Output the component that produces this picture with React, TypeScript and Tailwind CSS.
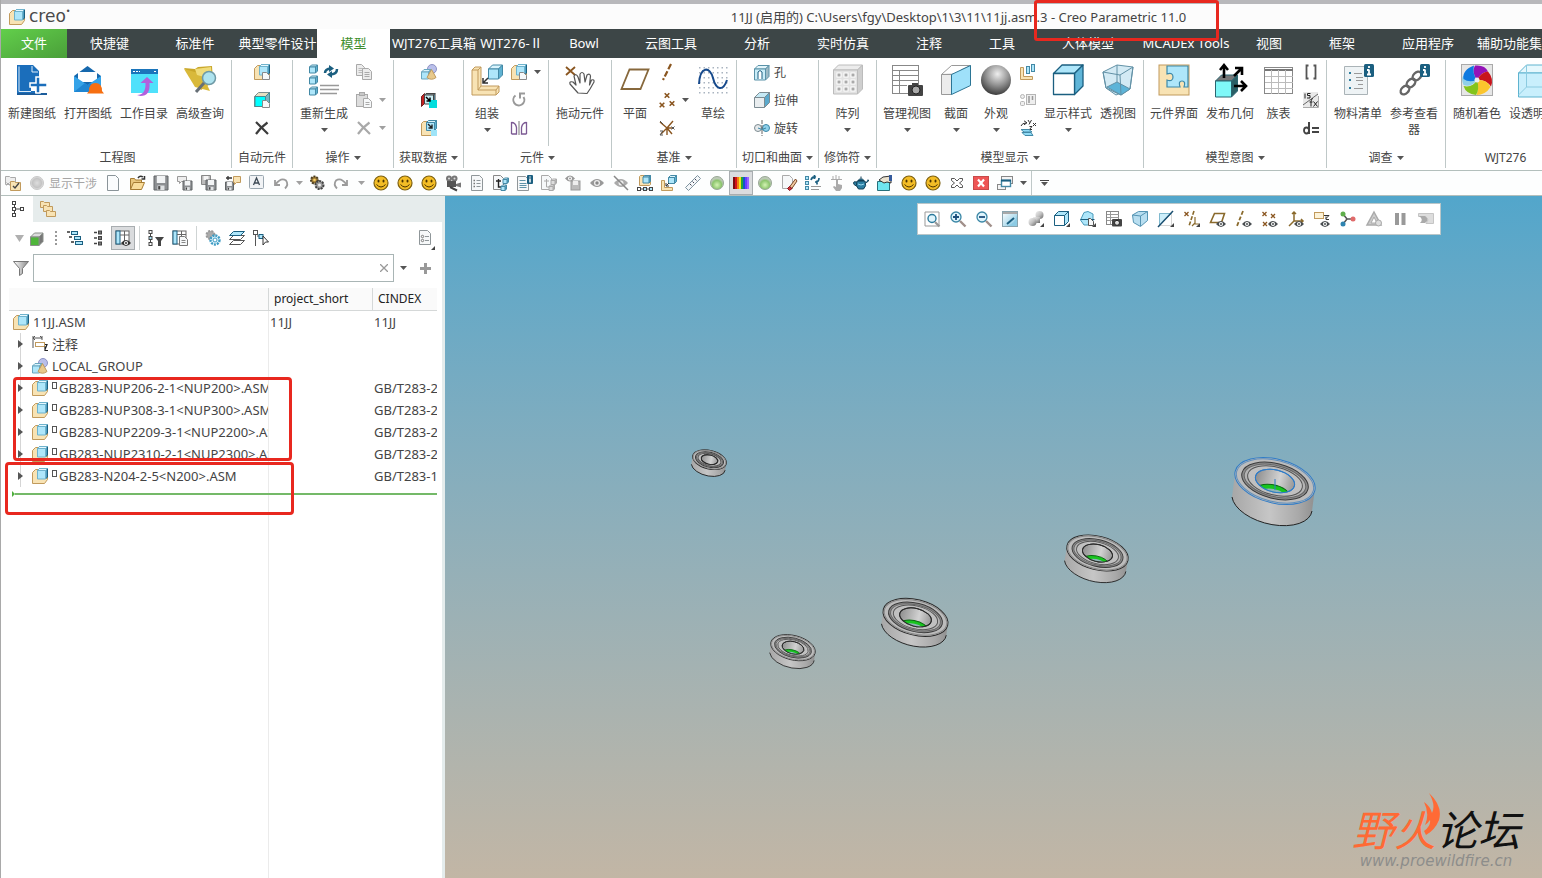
import type { ReactNode } from "react";

/* ---------- shared drawing parts ---------- */

const TAN = "#f8e3b4";
const TAN_D = "#c19a5c";
const SKY = "#aee6fa";
const SKY_D = "#1b5f80";
const SOFT = "#4389a6";

const cube = (x: number, y: number, s: number, d: number, front = SKY, edge = SOFT, top = "#d9f4fd", side = "#5fb2d2") => (
  <g stroke={edge} strokeLinejoin="round">
    <path d={`M${x} ${y + d} l${d} ${-d} h${s} l${-d} ${d} z`} fill={top} />
    <path d={`M${x + s} ${y + d} l${d} ${-d} v${s} l${-d} ${d} z`} fill={side} />
    <path d={`M${x} ${y + d} h${s} v${s} h${-s} z`} fill={front} />
  </g>
);

const page = (x: number, y: number, w: number, h: number, edge = "#8f9699", fill = "#f6f8f9") => (
  <path d={`M${x} ${y} h${w - 3} l3 3 v${h - 3} h${-w} z`} fill={fill} stroke={edge} />
);

const eye = (x: number, y: number, c = "#4a4f52") => (
  <g>
    <path d={`M${x - 5} ${y} q5 -6 10 0 q-5 6 -10 0z`} fill={c} />
    <circle cx={x} cy={y} r="2" fill="#fff" />
    <circle cx={x} cy={y} r="1" fill={c} />
  </g>
);

const cross = (x: number, y: number, r: number, c = "#8a5620", w = 1.3) => (
  <path d={`M${x - r} ${y - r} l${2 * r} ${2 * r} m0 ${-2 * r} l${-2 * r} ${2 * r}`} stroke={c} strokeWidth={w} fill="none" />
);

const floppy = (x: number, y: number, s: number) => (
  <g>
    <path d={`M${x} ${y} h${s} v${s} h${-s} z`} fill="#8c8f92" stroke="#606466" />
    <rect x={x + s * 0.2} y={y} width={s * 0.6} height={s * 0.5} fill="#f2f4f5" />
    <rect x={x + s * 0.25} y={y + s * 0.68} width={s * 0.5} height={s * 0.32} fill="#dfe2e4" />
    <rect x={x + s * 0.3} y={y + s * 0.72} width={s * 0.15} height={s * 0.25} fill="#444" />
  </g>
);

const asm = (
  <g>
    <path d="M.5 4.500 l3 -3 h12 v10 l-3 4 H.5 z" fill={TAN} stroke={TAN_D} />
    <path d="M5.500 2.500 l2 -2 h8 v8.500 l-2 2z" fill="#4d9fc2" stroke={SKY_D} />
    <path d="M5.500 2.500 l2 -2 h8 l-2 2z" fill="#e6f8fe" stroke="#6fb3cd" />
    <path d="M5.500 2.500 h8 v8.500 h-8z" fill={SKY} stroke="#6fb3cd" />
  </g>
);

const corner = <path d="M16 12 v4 h-4 z" fill="#444" />;
const dotGrid = (
  <g fill="#a9b4c0">
    {[2, 7, 12, 17, 22, 27].map((y) => [2, 6.500, 11, 15.500, 20, 24.500, 29].map((x) => <rect key={`${x}-${y}`} x={x} y={y + 1} width="1.500" height="1.500" />))}
  </g>
);

const small: Record<string, ReactNode> = {
  asm,
  asmDoc: (<g>{asm}{page(8.5, 8.5, 7, 7, "#888")}</g>),
  cyanDoc: (<g><path d="M.5 4.500 l4 -4 h11 v10 l-4 4 H.5z" fill="#e6e0c2" stroke="#7c8f90" /><rect x="1" y="4.500" width="10.500" height="10" fill="#0ff" stroke="#4c8a90" /><path d="M11.500 4.500l4 -4v10l-4 4z" fill="#7ab4c0" stroke="#4c8a90" />{page(8.5, 8.5, 7, 7, "#888")}</g>),
  bigX: <path d="M2 2 L14 14 M13.500 2.500 Q7 7 2 14" stroke="#3c3c3c" strokeWidth="2.200" fill="none" />,
  grayX: <path d="M2 2 L14 14 M13.500 2.500 Q7 7 2 14" stroke="#a9a9a9" strokeWidth="2.200" fill="none" />,
  copy: (<g>{page(0.5, 0.500, 8, 11, "#a9a9a9", "#ececec")}<path d="M2.500 4.500h4m-4 2h4m-4 2h4" stroke="#bbb" />{page(6.500, 4.500, 9, 11, "#a9a9a9", "#ececec")}<path d="M8.500 8.500h5m-5 2h5m-5 2h5" stroke="#aaa" /></g>),
  paste: (<g><rect x=".5" y="2.500" width="11" height="12" fill="#ddd" stroke="#a9a9a9" /><rect x="3.500" y=".5" width="5" height="3" fill="#c8c8c8" stroke="#a9a9a9" />{page(7.500, 6.500, 8, 9, "#a9a9a9")}<path d="M9.500 10.500h4m-4 2h4" stroke="#aaa" /></g>),
  shapes: (<g><circle cx="11" cy="5" r="4.500" fill="#b9bfea" stroke="#8d92c4" />{cube(0.5, 5.500, 7, 2.500, SKY, "#6aa7c0")}<path d="M10.500 5.500 L15 13.500 q-4.500 3.500 -9 0z" fill="#e8c98b" stroke={TAN_D} /></g>),
  importCyan: (<g><path d="M.5 4.500 l3 -3 v10 l-3 3z" fill="#c52020" stroke="#702020" />{cube(3.500, 1.500, 9, 1.500, "#c9eef5", "#444")}<rect x="8" y="8" width="8" height="8" fill="#0dd" /><path d="M5 5l4 4m0 -3.500v3.500h-3.500" stroke="#000" strokeWidth="1.500" fill="none" /></g>),
  importBlue: (<g><path d="M.5 3.500 l2 -2 h12 v10 l-3 4 H.5z" fill={TAN} stroke={TAN_D} />{cube(5.500, 0.500, 8, 2)}<path d="M7 4l4 4m0 -3.500v3.500h-3.500" stroke="#222" strokeWidth="1.400" fill="none" /><rect x="10" y="10" width="6" height="6" fill="#9fe4f8" /></g>),
  rotate: <path d="M4.500 3.500 A5.500 5.500 0 1 0 12.500 5 M14 1.500 h-5 v5" stroke="#999" strokeWidth="2" fill="none" />,
  mirror: <g fill="none"><path d="M.5 2v12M.5 2.500q4 0 5 5v6.500h-5M15.500 2v12M15.500 2.500q-4 0 -5 5v6.500h5" stroke="#7c5a94" strokeWidth="1.300" /><path d="M8 1v14" stroke="#777" /></g>,
  axis: <path d="M12 0 L4 16" stroke="#8a5620" strokeWidth="2.200" strokeDasharray="6 2" />,
  points: (<g>{cross(8, 3.500, 2.300, "#8a5620", 1.6)}{cross(3, 13, 2.300, "#8a5620", 1.6)}{cross(13, 11.500, 2.300, "#8a5620", 1.6)}</g>),
  csys: (<g><path d="M8 8 L1 2M8 8 L14 1M8 8 L2 14M8 8 L8 15M8 8H15M8 8 L13 14" stroke="#8a5620" strokeWidth="1.400" />{cross(14, 8, 1.500, "#555", 1)}<path d="M1 11h3l-3 4h3M1 1l3 3" stroke="#555" fill="none" /></g>),
  hole: (<g>{cube(0.500, 1.500, 11, 3.500, "#c9ecf7", "#5a92a8", "#e2f5fb", "#9dbac6")}<path d="M4 15V8q2 -3 4 0v7" fill="#fff" stroke={SKY_D} /></g>),
  extrude: (<g>{cube(0.500, 0.500, 10, 5, "#e9edef", "#7c8b92", "#c5e9f5", "#5aa9cc")}</g>),
  revolve: (<g><ellipse cx="4" cy="8" rx="3.500" ry="3.500" fill="#e5e9eb" stroke="#7d8b91" /><ellipse cx="12" cy="8" rx="3.500" ry="3.500" fill="#8fd0ea" stroke="#3a86a6" /><path d="M8 0v16" stroke="#666" strokeDasharray="4 1" /><path d="M4 8q4 3 8 0" fill="none" stroke="#3a86a6" /></g>),
  exploded: (<g><path d="M.5 3.500h3v9h9v3h-12z" fill={TAN} stroke={TAN_D} /><rect x="6.500" y="2.500" width="3" height="7" fill={SKY} stroke={SOFT} /><rect x="11.500" y=".5" width="3" height="7" fill={SKY} stroke={SOFT} /></g>),
  plates: (<g fill="#eee" stroke="#b5b5b5"><circle cx="2.500" cy="4.500" r="2" /><rect x=".5" y="9.500" width="4" height="4" rx="1" /><rect x="6.500" y="2.500" width="9" height="10" /><path d="M9 4v7M12.500 4v4" stroke="#999" strokeWidth="1.500" /></g>),
  orient: (<g><path d="M1 6q1 -3 5 -3M4 .8l3 2 -3 2" fill="none" stroke="#333" /><path d="M8 0l1.500 2.500m2 -2.500l-2.500 4.500M13 3l3 3m0 -3l-3 3M9.500 6.500h2.500l-2.500 3h2.500" stroke="#333" fill="none" /><path d="M1 9.500h8l3 2.500h-8zM2 12.500h9l2 3h-8z" fill="#8fdaf5" stroke={SOFT} /></g>),
  brackets: <path d="M5.500 1.500h-2v1.500l0 10v1.500h2M10.500 1.500h2v13h-2" stroke="#555" strokeWidth="1.800" fill="none" />,
  fx: (<g><rect x="0" y="0" width="15" height="15" fill="#e9e9e9" /><path d="M0 13L15 2" stroke="#666" /><path d="M2 1.500v5M7.500 1.500h-3v2h2.500v2.500h-3" stroke="#222" fill="none" /><path d="M10 6.500q-2 0 -2 3v5M6.500 10h3M10.500 9.500l4 5m0 -5l-4 5" stroke="#222" fill="none" /><path d="M0 15.500h15.500V4" stroke="#aaa" fill="none" /></g>),
  dEq: <g fill="none" stroke="#444"><path d="M6 2v12M9 8h7M9 12h7" strokeWidth="2" /><ellipse cx="3.500" cy="10.500" rx="2.500" ry="3" strokeWidth="1.800" /></g>,
  folderCheck: (<g><path d="M.5 1.500h4l1 1h5v7h-10z" fill="#eee" stroke="#aaa" />{cross(3, 9, 1.500, "#aaa", 1)}<path d="M5.500 6.500h4l1 1h5v8h-10z" fill={TAN} stroke={TAN_D} /><path d="M8 11l2 2 4 -5" fill="none" stroke="#444" strokeWidth="1.400" /></g>),
  ballGray: <circle cx="8" cy="8" r="6.500" fill="url(#gGray)" stroke="#c8c8c8" />,
  ballGreen: <circle cx="8" cy="8" r="6.500" fill="url(#gGreen)" stroke="#9aa898" />,
  newDoc: page(2.500, 0.500, 11, 15, "#8a9499", "#fafcfd"),
  open: (<g><path d="M1.500 14.500v-11h4l1 1.500h6v3" fill="#e9c77e" stroke="#a67c33" /><path d="M1.500 14.500l3 -7h11l-3 7z" fill="#f9dd9b" stroke="#a67c33" /><path d="M9 3q2 -3 5 -1M12.500 4h3v-3" fill="none" stroke="#333" strokeWidth="1.500" /></g>),
  save: floppy(1, 1, 14),
  saveAs: (<g><path d="M.5 1.500h9v5h-5l-2 2v-2h-2z" fill="#eee" stroke="#999" />{floppy(6, 6, 9)}</g>),
  saveCopy: (<g><path d="M.5 .5h9v9h-9z" fill="#bbb" stroke="#888" /><rect x="2.500" y="1" width="5" height="4" fill="#f5f5f5" />{floppy(5, 5, 10)}</g>),
  saveBack: (<g>{floppy(0.500, 7, 8)}<path d="M8.500 1.500h7v6h-4l-2 2v-2h-1z" fill={TAN} stroke={TAN_D} /><path d="M1 3h6M3 1v4" stroke="#333" strokeWidth="1.300" /></g>),
  letterA: (<g><rect x=".5" y=".5" width="14" height="13" rx="1" fill="#f1f3f5" stroke="#9aa7b0" /><path d="M4.500 10L7.500 3l3 7M5.500 8h4" fill="none" stroke="#3e4a55" strokeWidth="1.300" /></g>),
  undo: <path d="M2 5v5h5M2.500 9.500Q8 2 13 5.500q3 4 -1 8" fill="none" stroke="#9b9b9b" strokeWidth="1.800" />,
  redo: <path d="M14 5v5H9M13.500 9.500Q8 2 3 5.500q-3 4 1 8" fill="none" stroke="#9b9b9b" strokeWidth="1.800" />,
  gears: (<g><circle cx="5.500" cy="5" r="3.500" fill="#a07b34" stroke="#4c3f22" strokeWidth="2" strokeDasharray="2 1" /><circle cx="10.500" cy="10" r="4" fill="#999" stroke="#444" strokeWidth="2" strokeDasharray="2 1" /><circle cx="10.500" cy="10" r="1.500" fill="#eee" /><circle cx="5.500" cy="5" r="1.300" fill="#f6d26a" /></g>),
  smile: (<g><circle cx="8" cy="8" r="7" fill="#f3bd26" stroke="#7d6010" strokeWidth="1.200" /><ellipse cx="5.500" cy="6" rx="1" ry="1.600" fill="#4a3300" /><ellipse cx="10.500" cy="6" rx="1" ry="1.600" fill="#4a3300" /><path d="M3.500 9.500q4.500 5 9 0" fill="none" stroke="#4a3300" /></g>),
  camera: (<g fill="#777"><circle cx="4" cy="3.500" r="3" /><circle cx="9.500" cy="3.500" r="3" /><rect x="2" y="6" width="9" height="6" fill="#555" /><path d="M11 9l5 -1.500v5L11 11z" /><path d="M5 12l7 3.500" stroke="#444" strokeWidth="2" /><circle cx="4" cy="3.500" r="1" fill="#ddd" /><circle cx="9.500" cy="3.500" r="1" fill="#ddd" /></g>),
  docList: (<g>{page(2.500, 0.500, 11, 15)}<path d="M7.500 5.500h4m-4 3h4m-4 3h4" stroke="#8f9699" /><path d="M4.500 5.500h1.500m-1.500 3h1.500m-1.500 3h1.500" stroke="#777" strokeWidth="1.500" /></g>),
  docTree: (<g>{page(0.500, 0.500, 10, 14, "#888")}<path d="M3 6h5M5.500 4v8h4" stroke="#222" strokeWidth="1.400" fill="none" />{cube(10, 3, 4, 1.500)}{cube(8, 10, 4, 1.500)}</g>),
  docTreeG: (<g>{page(0.500, 0.500, 10, 14, "#aaa")}<path d="M3 6h5M5.500 4v8h4" stroke="#aaa" fill="none" />{cube(10, 4, 4, 1.500, "#ddd", "#aaa", "#eee", "#bbb")}{cube(8, 10, 4, 1.500, "#ddd", "#aaa", "#eee", "#bbb")}</g>),
  docInfo: (<g>{page(0.500, 1.500, 11, 14)}<path d="M2.500 5.500h6m-6 3h7m-7 2h7m-7 2h7" stroke="#5f93a8" /><rect x="10" y="0" width="6" height="9" rx="1" fill={SKY_D} /><path d="M13 3.500v4M13 1.500v1" stroke="#fff" strokeWidth="1.500" /></g>),
  eyeSave: (<g>{eye(5, 3.500, "#999")}<rect x="6" y="6" width="9" height="9" fill="#bbb" stroke="#999" /><rect x="8" y="6" width="5" height="4" fill="#eee" /></g>),
  eye: <g><path d="M1 8q7 -8 14 0q-7 8 -14 0z" fill="#999" /><circle cx="8" cy="8" r="3" fill="#eee" /><circle cx="8" cy="8" r="1.700" fill="#888" /></g>,
  eyeOff: <g><path d="M1 8q7 -8 14 0q-7 8 -14 0z" fill="#aaa" /><circle cx="8" cy="8" r="2.500" fill="#eee" /><path d="M1 1l14 14" stroke="#888" strokeWidth="1.500" /></g>,
  asmTree: (<g><path d="M2.500 1.500l1-1h10v9l-1 1h-10z" fill={TAN} stroke={TAN_D} />{cube(6, 0.500, 6, 1.500)}<g fill="#fff" stroke="#444"><rect x=".5" y="12.500" width="3" height="3" /><rect x="6.500" y="12.500" width="3" height="3" fill={SKY} /><rect x="12.500" y="12.500" width="3" height="3" fill={SKY} /><path d="M4 14h2m4 0h2" /></g></g>),
  assemble: (<g><path d="M.5 5.500h3v7h8v3h-11z" fill={TAN} stroke={TAN_D} />{cube(7.500, 0.500, 6, 2)}<path d="M8 8l-3 3m0 -3v3h3" stroke="#333" fill="none" /></g>),
  ruler: (<g><path d="M.5 12.500L12.500 .5l3 3 -12 12z" fill="#f4f7f9" stroke="#8094a0" /><path d="M5 9l1.500 1.500M7.500 6.500l1.500 1.500M10 4l1.500 1.500" stroke="#445" /></g>),
  rainbow: (<g>{["#7a0d12", "#d3121b", "#f07d13", "#f6e51a", "#23a638", "#1458c8", "#6a3cff", "#9a64ff"].map((c, i) => <rect key={c} x={i * 2} y="2" width="2" height="12" fill={c} />)}</g>),
  eraser: (<g>{page(1.500, 0.500, 10, 13, "#aaa")}<path d="M14.500 4l-6 8 2 2 5.500 -8z" fill="#f1c9a0" stroke="#7a4a2a" /><path d="M8.500 11.500l-2 2 2 2 2.500 -2z" fill="#c33" stroke="#812" /></g>),
  listSync: (<g><g fill={SKY} stroke={SOFT}><rect x=".5" y="1.500" width="3" height="3" /><rect x=".5" y="6.500" width="3" height="3" /><rect x=".5" y="11.500" width="3" height="3" /></g><path d="M6 5q1 -4 5 -3M9.500 0v4M14 3q0 4 -4 4M12 5.500v4" stroke={SKY_D} strokeWidth="1.700" fill="none" /><path d="M6 11.500h10M6 14.500h8" stroke="#999" /></g>),
  tap: (<g fill="#aaa"><path d="M4 1v4M7 0v4M10 1v4M2 4.500h11" stroke="#aaa" /><path d="M7 5h2v4l4 1v3l-2 3H7l-3 -4 1 -1 2 1z" /></g>),
  teapot: (<g fill="#2a7fa3" stroke="#123f55"><path d="M4 6h8q2 5 -1.500 8h-5Q2 11 4 6zM12.500 8q4 -2 3 -3l-1 0M3.500 7q-3 -1 -3 1t3 3" /><path d="M5 5.500q3 -3.500 6 0zM8 3V1.500" /><path d="M5 9q3 2 6 0" stroke="#9bd8ee" fill="none" /></g>),
  folderHand: (<g><path d="M.5 6.500h12v9h-12z" fill="#6fe6f0" stroke="#27707b" /><path d="M2 5l4 -3 8 -1v7l-4 -1 -3 1z" fill="#e9e2cf" stroke="#333" /><rect x="12" y="0" width="3" height="6" fill="#345a9c" /></g>),
  xx: <path d="M2.500 3.500h3l2.500 2.500 2.500 -2.500h3v2l-3 2.500 3 2.500v2h-3l-2.500 -2.500 -2.500 2.500h-3v-2l3 -2.500 -3 -2.500z" fill="#fff" stroke="#555" />,
  redX: (<g><rect x=".5" y="1.500" width="15" height="13" fill="#ee5555" stroke="#c74a4a" /><path d="M5 4.500l6 7m0 -7l-6 7" stroke="#fff" strokeWidth="2.200" /></g>),
  windows: (<g fill="#f4f4f4"><rect x="4.500" y="1.500" width="11" height="7" stroke="#888" /><rect x=".5" y="9.500" width="8" height="5" stroke="#888" /><rect x="4.500" y="5.500" width="9" height="6" fill="#fff" stroke={SOFT} strokeWidth="1.400" /><path d="M4 5.500h10" stroke={SKY_D} strokeWidth="2" /></g>),
  /* model tree panel */
  tree: (<g fill="#fff" stroke="#444"><path d="M3.500 4v8M5 8h6" /><rect x="1.500" y=".5" width="3" height="3" /><rect x="1.500" y="6.500" width="3" height="3" /><rect x="1.500" y="12.500" width="3" height="3" /><rect x="9.500" y="6.500" width="3" height="3" /></g>),
  folders: (<g fill={TAN} stroke={TAN_D}><path d="M.5 .5h3l1 1h5v5h-9z" /><path d="M3.500 4.500h3l1 1h5v5h-9z" /><path d="M6.500 9.500h3l1 1h5v5h-9z" /></g>),
  greenCube: cube(1.500, 1, 8.500, 4, "#4fb53a", "#8a8f8a", "#dcdcdc", "#777"),
  dots: (<g fill="#999"><rect x="7" y="1" width="2" height="2" /><rect x="7" y="5" width="2" height="2" /><rect x="7" y="9" width="2" height="2" /><rect x="7" y="13" width="2" height="2" /></g>),
  expand: (<g fill={SKY} stroke={SKY_D}><rect x="4.500" y="1.500" width="6" height="3" /><rect x="7.500" y="6.500" width="6" height="3" /><rect x="8.500" y="11.500" width="7" height="3" /><path d="M0 2h3M2 7h3M4 12h3" stroke="#333" strokeWidth="1.600" /></g>),
  collapse: (<g fill="#777" stroke="#444"><rect x="7.500" y="1" width="3" height="3" /><rect x="7.500" y="6.500" width="3" height="3" /><rect x="7.500" y="12" width="3" height="3" /><path d="M3 2.500h3M3 8h3M3 13.500h3" strokeWidth="1.600" /></g>),
  colsEye: (<g><rect x="1" y="1" width="13" height="13" fill="#fff" stroke="#666" /><rect x="1" y="1" width="4" height="13" fill={SKY} stroke={SKY_D} /><path d="M5 5h9M9.500 1v10" stroke="#666" />{eye(11, 13, "#333")}</g>),
  treeFilter: (<g><g fill="#fff" stroke="#444"><path d="M2.500 4v8" /><rect x="1" y=".5" width="3" height="3" /><rect x="1" y="6.500" width="3" height="3" fill={SKY} /><rect x="1" y="12.500" width="3" height="3" /></g><path d="M7 7h9l-3 4v5h-3v-5z" fill="#444" /></g>),
  colsDoc: (<g><rect x="1" y="1" width="13" height="13" fill="#fff" stroke="#666" /><rect x="1" y="1" width="4" height="13" fill={SKY} stroke={SKY_D} /><path d="M5 4.500h9M9.500 1v10" stroke="#666" />{page(7.500, 6.500, 8, 9, "#777")}<path d="M9.500 10.500h4m-4 2h4" stroke="#888" /></g>),
  gearBlue: (<g><circle cx="5.500" cy="5" r="4" fill="#aaa" stroke="#999" strokeWidth="2" strokeDasharray="2 1.200" /><circle cx="10" cy="10" r="4.500" fill="#e2f5fc" stroke="#3f9cc4" strokeWidth="2.400" strokeDasharray="2 1" /><circle cx="10" cy="10" r="2" fill="#fff" stroke="#3f9cc4" /></g>),
  layers: (<g fill="#fff" stroke="#555"><path d="M.5 14.500l4 -4h11l-4 4z" /><path d="M.5 9.500l4 -4h11l-4 4z" /><path d="M.5 5.500l4 -4h11l-4 4z" fill={SKY} stroke={SKY_D} /></g>),
  treeCursor: (<g fill="#fff" stroke="#555"><path d="M2.500 4v12M4 6h4" /><rect x=".5" y=".5" width="4" height="4" /><rect x="6" y="4.500" width="4" height="4" fill={SKY} stroke={SKY_D} /><path d="M10 6l5.500 6h-3l-2.500 3z" stroke="#333" /></g>),
  docCorner: (<g>{page(2.500, 0.500, 11, 14)}<path d="M8 6.500h4m-4 4h4" stroke="#8f9699" /><circle cx="5.500" cy="6.500" r="1.200" fill="none" stroke="#777" /><circle cx="5.500" cy="10.500" r="1.200" fill="none" stroke="#777" /></g>),
  funnel: <path d="M.5 1.500h15l-6 7v5l-3 2v-7z" fill="url(#gFunnel)" stroke="#777" />,
  note: (<g><path d="M1 0v12M1 2h9M10 0v4M3 0l-2 2 2 2M8 0l2 2" stroke="#555" fill="none" /><rect x="3.500" y="6.500" width="9" height="4" fill="#fff" stroke={TAN_D} /><path d="M13 8.500h2l-2 5m0 -3v4h3" stroke="#222" fill="none" strokeWidth="1.200" /></g>),
  /* view toolbar */
  refit: (<g><path d="M1 15V1h14v14z" fill="#fff" stroke="#999" /><circle cx="8" cy="7.500" r="4" fill="#dff4fc" stroke="#2b7a9c" strokeWidth="1.400" /><path d="M11 11l4.500 4.500" stroke="#999" strokeWidth="2.200" /></g>),
  zoomIn: (<g><circle cx="6" cy="6" r="5" fill="#dff4fc" stroke="#3b87a6" strokeWidth="1.300" /><path d="M3 6h6M6 3v6" stroke="#1c4f7c" strokeWidth="1.800" /><path d="M10 10l5.500 5.500" stroke="#a08f8a" strokeWidth="2.400" /></g>),
  zoomOut: (<g><circle cx="6" cy="6" r="5" fill="#dff4fc" stroke="#3b87a6" strokeWidth="1.300" /><path d="M3 6h6" stroke="#1c4f7c" strokeWidth="1.800" /><path d="M10 10l5.500 5.500" stroke="#a08f8a" strokeWidth="2.400" /></g>),
  repaint: (<g><rect x=".5" y=".5" width="15" height="15" fill="url(#gPaint)" stroke="#8aa4ae" /><rect x="1" y="1" width="14" height="2" fill="#a9a9a9" /><path d="M5 15Q14 12 15 4v11z" fill="#8ccbe4" /><path d="M5 13L12 7" stroke={SKY_D} strokeWidth="2" /></g>),
  shading: (<g><circle cx="11.500" cy="4" r="4" fill="url(#gLight)" /><rect x="5" y="6" width="7" height="6" fill="url(#gLight)" /><circle cx="4.500" cy="11" r="4" fill="url(#gLight)" />{corner}</g>),
  styleCube: (<g>{cube(0.500, 0.500, 10, 4, "#fff", SKY_D, "#aee6fa", "#aee6fa")}{corner}</g>),
  saved: (<g><path d="M.5 9L4 1.500L8 .5l5 2.500v8l-5 3h-4z" fill={SKY} stroke="#4b9bbb" /><path d="M.5 8.500h14" stroke="#1b5f80" />{page(8.500, 7.500, 5, 7, "#555")}{corner}</g>),
  viewMgr: (<g><rect x=".5" y=".5" width="12" height="13" fill="#fff" stroke="#888" /><path d="M1 3.500h12M1 6.500h12M1 9.500h6M4.500 1v12" stroke="#999" /><rect x="6" y="8" width="10" height="7.500" rx="1" fill="#444" /><circle cx="11" cy="11.800" r="2.500" fill="#ddd" stroke="#222" /></g>),
  persp: (<g><path d="M.5 4l6 -3.500h9v9l-7 6 -7 -4z" fill="#b8def0" stroke="#5594b3" /><path d="M.5 4l8 1 7 -4.500M8.500 5v10" stroke="#5594b3" fill="none" /></g>),
  section: (<g><rect x="1.500" y="2.500" width="12" height="12" fill="#fff" stroke="#aaa" strokeDasharray="1 1" /><path d="M1.500 14.500v-12h12z" fill="#cdeefa" stroke="#7fb9cf" /><path d="M0 16L15 0" stroke="#1b4f70" strokeWidth="1.500" />{corner}</g>),
  datums: (<g>{cross(2.500, 3, 2)}<path d="M10 0L5 15" stroke="#8a6a2c" strokeWidth="1.600" strokeDasharray="4 1.500" /><path d="M11 6v7h4M11 12l-3 3" stroke="#8a6a2c" strokeWidth="1.200" />{corner}</g>),
  planeEye: (<g><path d="M.5 11.500l4 -9h10l-3 9z" fill="#fff" stroke="#8a6a2c" strokeWidth="1.600" />{eye(11, 13)}</g>),
  axisEye: (<g><path d="M7 0L1 15" stroke="#8a6a2c" strokeWidth="1.800" strokeDasharray="4 2" />{eye(11, 13)}</g>),
  pointEye: (<g>{cross(2.500, 3, 2)}{cross(11, 5, 2)}{cross(3, 13, 2)}{eye(11, 13)}</g>),
  csysEye: (<g><path d="M6 1v9h9M6 10l-5 5M4 3l2 -2 2 2M13 8l2 2 -2 2" stroke="#8a6a2c" strokeWidth="1.500" fill="none" />{eye(11, 13)}</g>),
  noteEye: (<g><rect x=".5" y="1.500" width="9" height="6" fill="#fdf3d8" stroke={TAN_D} /><path d="M10 4.500h5l-3 3m0 -2v3h3" stroke="#333" fill="none" />{eye(11, 13)}</g>),
  spin: (<g><path d="M3 3l4 5h6M7 8l-4 5" stroke="#555" strokeWidth="1.500" fill="none" /><circle cx="3" cy="3" r="2.500" fill="#5fae4b" /><circle cx="13" cy="8" r="2.500" fill="#e06a6a" /><circle cx="3" cy="13" r="2.500" fill="#2f84b0" /></g>),
  sim: (<g fill="#ccc" stroke="#aaa"><path d="M8 1l7 13H1z" strokeWidth="1.500" /><path d="M8 6l3 6H5z" fill="#fff" /><circle cx="12.500" cy="12" r="3" fill="#ddd" /></g>),
  pause: <g fill="#999"><rect x="3" y="2" width="4" height="12" /><rect x="9.500" y="2" width="4" height="12" /></g>,
  resume: (<g><path d="M.5 2.500h15v10H8q4 -4 -.5 -7h-7z" fill="#ddd" stroke="#c5c5c5" /><path d="M1 5h6q5 4 0 7H2q4 -3.500 -1 -7z" fill="#aaa" /></g>),
};

const large: Record<string, ReactNode> = {
  newDrawing: (<g><path d="M1 1h16l6 6v11h-3v3h-5v6h4v3H1z" fill="#1b6ebb" /><path d="M1 29h30v2H1z" fill="#1c5d9c" /><path d="M3 2.500v25M3 27.500h12M16 2v6h6" stroke="#dcecf9" fill="none" /><path d="M20 13h4v6h7v4h-7v6h-4v-6h-6v-4h6z" fill="#1b6ebb" stroke="#fff" strokeWidth="1.500" /></g>),
  openDrawing: (<g><path d="M2 12L15.500 2 29 12v16H2z" fill="#1668ad" /><path d="M6 8h19v10H6z" fill="#fff" /><path d="M2 12l13.500 9L29 12v16H2z" fill="#35a3e8" /><path d="M2 28l11 -9 2.500 2 2.500 -2 11 9z" fill="#1f86d2" /><path d="M17 27q0 -8 6.500 -8t6.500 8l2 2.500H15z" fill="#f66f11" /></g>),
  workDir: (<g><rect x="3" y="5" width="27" height="24" fill="#4fe1fb" /><rect x="3" y="5" width="27" height="5" fill="#1b75bb" /><path d="M5 7.500h7M26 7.500h2" stroke="#fff" strokeDasharray="2 1" /><path d="M9 31q9 0 8.500 -12h-5L19 13l6.500 6h-4q1 13 -9 13z" fill="#b260dd" /></g>),
  search: (<g><path d="M0 4l11 1 3 -2 14 -1 1 16 -12 8z" fill="#c9a72a" /><path d="M0 5l11 18 15 4 -8 -17z" fill="#d9b93a" /><path d="M11 5l16 -2 1 12 -15 -4z" fill="#f0dc7a" /><circle cx="25" cy="14" r="6.500" fill="#aee3ef" stroke="#6f9aa6" strokeWidth="1.500" /><path d="M20 19L12 28" stroke="#666f76" strokeWidth="3" /></g>),
  regen: (<g>{[1, 12, 23].map((y) => <g key={y}>{cube(1.500, y, 6, 2)}</g>)}<path d="M17 9q0 -4 6 -4.500" stroke={SKY_D} strokeWidth="2.500" fill="none" /><path d="M21 1l5 3.500 -5 3.500z" fill={SKY_D} /><path d="M29 5q0 5 -6 5.500" stroke={SKY_D} strokeWidth="2.500" fill="none" /><path d="M24 7l-5 3.500 5 3.500z" fill={SKY_D} /><path d="M12 21.500h19M12 25.500h19M12 29.500h17" stroke="#999" strokeWidth="1.600" /></g>),
  assemble: (<g><path d="M1 6l3 -3h6v19h18v6l-3 3H1z" fill={TAN} stroke={TAN_D} /><path d="M1 6h6v20h18M7 6l3 -3M7 26l3 -4M25 26l3 -4M25 26v5" fill="none" stroke={TAN_D} />{cube(17.500, 1, 10, 4)}<path d="M17 14l-5 5m0 -5v5h5" stroke="#333" strokeWidth="1.500" fill="none" /></g>),
  drag: (<g><path d="M2 3l9 8m0 -8l-9 8" stroke="#8a5620" strokeWidth="1.800" /><path d="M14 29l-8 -9q-1 -3 3 -2l3 3L10 12q2 -3 4 1l2 6 0 -9q2 -3 4 0l1 8 2 -7q3 -2 3.500 1l-1 9 2 -5q3 -1 2.500 2L26 25l-3 4.500z" fill="#fff" stroke="#555" strokeWidth="1.200" strokeLinejoin="round" /></g>),
  plane: <path d="M2.500 25L10.500 5.500h19L21.500 25z" fill="#fff" stroke="#87683c" strokeWidth="1.800" />,
  sketch: (<g>{dotGrid}<path d="M2 20C3 2 13 2 16 14S26 28 30 16" fill="none" stroke="#174a8c" strokeWidth="2" /></g>),
  pattern: (<g>{cube(1.500, 1, 24, 5, "#e2e2e2", "#bcbcbc", "#ececec", "#cfcfcf")}<g fill="#aaa">{[9, 16, 23].map((y) => [5, 12, 19].map((x) => <rect key={`${x}${y}`} x={x} y={y} width="4" height="4" stroke="#fff" />))}</g></g>),
  viewMgr: (<g><rect x="1.500" y="1.500" width="26" height="28" fill="#fff" stroke="#888" /><path d="M2 6.500h26M2 11.500h26M2 16.500h26M2 21.500h14M8.500 6v24" stroke="#888" /><rect x="17" y="21" width="15" height="11" rx="1" fill="#444" /><rect x="21" y="19" width="6" height="3" fill="#444" /><circle cx="25" cy="26" r="4" fill="#aaa" stroke="#222" /></g>),
  section: (<g><path d="M1.500 10.500l10 -9h19L21 6v4z" fill="#fff" stroke="#999" /><path d="M1.500 10.500h10v20h-10z" fill="#ececec" stroke="#999" /><path d="M11.500 10.500L30.500 1.500v20l-19 9z" fill="#9fe1fa" stroke="#2b7595" /></g>),
  sphere: <circle cx="16" cy="16" r="15" fill="url(#gSphere)" />,
  display: <g strokeWidth="1.300">{cube(1.500, 1, 21, 8.500, "#fff", SKY_D, "#aee6fa", "#5fb5d8")}</g>,
  perspective: (<g fill="#a9dcf0" stroke="#6291a6"><path d="M1 8l14 -7 16 2 -3 22 -14 6L4 24z" fill="#d3eaf4" /><path d="M1 8l17 3L31 3l-3 22 -9 6 -15 -7z" fill="none" /><path d="M5 23l10 -5 13 7 -9 6z" fill="#5db4d8" /><path d="M15 1v17M18 11l1 20" /></g>),
  interface: (<g><rect x="1" y="1" width="30" height="30" fill={TAN} stroke={TAN_D} /><path d="M9 2h21v21h-4q2 -6 -2 -6t-2 6H9v-7q6 2 6 -3t-6 -3z" fill={SKY} stroke="#3c88a8" strokeWidth="1.200" /></g>),
  publish: (<g>{cube(1.500, 11, 16, 6, "#7ff8f8", "#2b6570", "#777", "#2a5f66")}<path d="M10 14V2M6 6l4 -5 4 5M20 12l7 -7M21 4h7v7M20 22h11M27 17l5 5 -5 5" stroke="#000" strokeWidth="2.600" fill="none" /></g>),
  table: (<g><rect x="1.500" y="3.500" width="28" height="26" fill="#fff" stroke="#888" /><path d="M2 6h28" stroke="#777" strokeWidth="2" /><path d="M2 12.500h28M2 18.500h28M2 24.500h28M8.500 6v24M15.500 6v24M22.500 6v24" stroke="#bbb" /></g>),
  bom: (<g>{page(2.500, 2.500, 23, 28, "#aab3b7", "#eef3f5")}<path d="M7 9h2M7 16h2M7 24h2" stroke="#2f7fa0" strokeWidth="2" /><path d="M12 9.500h8M14 13.500h7M14 16.500h7M16 20.500h5M12 24.500h9" stroke="#999" /><rect x="22" y="0" width="10" height="13" rx="1.500" fill={SKY_D} /><path d="M27 5.500v5M25 10.500h4M27 2v2M25 6h2" stroke="#fff" strokeWidth="1.800" /></g>),
  refs: (<g fill="none" stroke="#666" strokeWidth="2.400"><ellipse cx="7" cy="26" rx="5" ry="3.500" transform="rotate(-45 7 26)" /><ellipse cx="13" cy="19" rx="5" ry="3.500" transform="rotate(-45 13 19)" /><ellipse cx="19" cy="12" rx="5" ry="3.500" transform="rotate(-45 19 12)" /><rect x="22" y="0" width="10" height="13" rx="1.500" fill={SKY_D} stroke="none" /><path d="M27 5.500v5M25 10.500h4M27 2v2M25 6h2" stroke="#fff" strokeWidth="1.800" /></g>),
  color: (<g><rect x=".5" y=".5" width="31" height="31" fill="#e6e6e6" stroke="#aaa" /><path d="M16 16Q10 8 14 1.500q10 -1 13 6Q20 8 16 16z" fill="#9413b8" /><path d="M16 16Q20 8 27 7.500q6 7 3 15Q25 15 16 16z" fill="#c8141c" /><path d="M16 16q10 -1 13.500 7 -5 8 -14 8 3 -7 .5 -15z" fill="#fbc52d" /><path d="M16 16q3 9 -1 15Q5 30 2.500 22q9 2 13.500 -6z" fill="#83c41c" /><path d="M16 16Q10 24 2.500 21 0 15 2 12q8 -1 14 4z" fill="#8fd0e8" /><path d="M16 16Q8 19 2.500 15 1 6 13 1.500q-2 8 3 14.500z" fill="#0f7ae0" /><circle cx="16" cy="16" r="2.500" fill="#eee" /></g>),
  transparent: (<g>{cube(1.500, 1, 24, 8, "#c9effc", "#5fb3cf", "#e6f8fd", "#a9dff0")}<path d="M9.500 1v22h24M9.500 23L1.500 31" stroke="#8ccbe0" fill="none" /></g>),
};

/* ---------- small UI parts ---------- */

const S = ({ n }: { n: string }) => (
  <svg viewBox="0 0 16 16" className="h-4 w-4 shrink-0 overflow-visible" fill="none" aria-hidden="true">{small[n]}</svg>
);

const L = ({ n }: { n: string }) => (
  <svg viewBox="0 0 32 32" className="h-8 w-8 shrink-0 overflow-visible" fill="none" aria-hidden="true">{large[n]}</svg>
);

const Caret = ({ dim = false }: { dim?: boolean }) => (
  <svg viewBox="0 0 7 4" className="h-1 w-[7px] shrink-0" aria-hidden="true">
    <path d="M0 0h7L3.500 4z" fill={dim ? "#a0a0a0" : "#555"} />
  </svg>
);

const Big = ({ icon, label, w = "w-14", drop = false }: { icon: string; label: string; w?: string; drop?: boolean }) => (
  <button className={`flex shrink-0 flex-col items-center pt-[6px] ${w}`}>
    <L n={icon} />
    <span className="mt-[10px] text-center leading-4 break-all">{label}</span>
    {drop && <span className="flex h-4 items-center"><Caret /></span>}
  </button>
);

type Mini = { icon: string; drop?: boolean; dim?: boolean; text?: string };

const Minis = ({ items, w = "w-6" }: { items: Mini[]; w?: string }) => (
  <div className={`flex shrink-0 flex-col ${w}`}>
    {items.map((m) => (
      <div key={m.icon} className="flex h-7 items-center">
        <button aria-label={m.text ?? m.icon} className="flex h-6 min-w-6 items-center justify-center gap-1">
          <S n={m.icon} />
          {m.text && <span className="pt-[2px]">{m.text}</span>}
        </button>
        {m.drop && <button aria-label={`${m.icon} menu`} className="flex h-6 w-3 items-center justify-center"><Caret dim={m.dim} /></button>}
      </div>
    ))}
  </div>
);

const Group = ({ label, w, drop = false, children }: { label: string; w: string; drop?: boolean; children: ReactNode }) => (
  <section className={`flex shrink-0 ${w}`}>
    <div className="flex min-w-0 flex-1 flex-col">
      <div className="flex h-[88px]">{children}</div>
      <div className="flex h-6 items-center justify-center gap-1 whitespace-nowrap">
        {label}
        {drop && <Caret />}
      </div>
    </div>
    <div className="my-[2px] w-px bg-[#bfc8c8]" />
  </section>
);

/* ---------- data ---------- */

const tabs: [string, string][] = [
  ["文件", "w-[66px]"], ["快捷键", "w-[85px]"], ["标准件", "w-[86px]"], ["典型零件设计", "w-[79px]"], ["模型", "w-[73px]"],
  ["WJT276工具箱", "w-[88px]"], ["WJT276-Ⅱ", "w-[67px]"], ["Bowl", "w-[78px]"], ["云图工具", "w-[96px]"], ["分析", "w-[76px]"],
  ["实时仿真", "w-[96px]"], ["注释", "w-[76px]"], ["工具", "w-[70px]"], ["人体模型", "w-[102px]"], ["MCADEx Tools", "w-[94px]"],
  ["视图", "w-[72px]"], ["框架", "w-[74px]"], ["应用程序", "w-[98px]"], ["辅助功能集", "w-[67px]"],
];

const quickA = ["newDoc", "open", "save", "saveAs", "saveCopy", "saveBack", "letterA", "undo"];
const quickB = [
  "smile", "smile", "smile", "camera", "docList", "docTree", "docInfo", "docTreeG", "eyeSave", "eye", "eyeOff", "asmTree", "assemble",
  "ruler", "ballGreen", "rainbow", "ballGreen", "eraser", "listSync", "tap", "teapot", "folderHand", "smile", "smile", "xx", "redX", "windows",
];

const viewTools = [
  "refit", "zoomIn", "zoomOut", "repaint", "shading", "styleCube", "saved", "viewMgr", "persp", "section",
  "datums", "planeEye", "axisEye", "pointEye", "csysEye", "noteEye", "spin", "sim", "pause", "resume",
];

const parts: [string, string][] = [
  ["GB283-NUP206-2-1<NUP200>.ASM", "GB/T283-2007"],
  ["GB283-NUP308-3-1<NUP300>.ASM", "GB/T283-2007"],
  ["GB283-NUP2209-3-1<NUP2200>.ASM", "GB/T283-2007"],
  ["GB283-NUP2310-2-1<NUP2300>.ASM", "GB/T283-2007"],
  ["GB283-N204-2-5<N200>.ASM", "GB/T283-1994"],
];

const QuickButton = ({ n, active = false }: { n: string; active?: boolean }) => (
  <button aria-label={n} className={`flex h-6 w-6 shrink-0 items-center justify-center ${active ? "border border-[#a8adb0] bg-[#dadcde]" : ""}`}>
    <S n={n} />
  </button>
);

const Expander = () => (
  <button aria-label="展开" className="flex h-[22px] w-[23px] shrink-0 items-center justify-center bg-[linear-gradient(#d5d5d5,#d5d5d5)] bg-[length:1px_100%] bg-[position:11px_0] bg-no-repeat">
    <svg viewBox="0 0 5 8" className="h-2 w-[5px]"><path d="M0 0l5 4 -5 4z" fill="#555" /></svg>
  </button>
);

/* Ball bearing seen from above; the rim is an ellipse of 41 x 22 units tilted by 14 degrees. */
const Bearing = ({ depth, dx, id, green = true, selected = false, line = 1 }: { depth: number; dx: number; id: string; green?: boolean; selected?: boolean; line?: number }) => {
  const ring = (rx: number, ry: number, fill: string, stroke = "#3a3a3a") => (
    <ellipse rx={rx} ry={ry} transform="rotate(14)" fill={fill} stroke={stroke} strokeWidth={line} />
  );
  const edge = selected ? "#2f7cc8" : "#2b2b2b";
  return (
    <svg viewBox="-50 -30 100 90" className="h-full w-full" aria-hidden="true">
      <defs>
        <linearGradient id={`${id}s`}><stop offset="0" stopColor="#a7a7a7" /><stop offset=".45" stopColor="#c6c6c6" /><stop offset=".8" stopColor="#a9a9a9" /><stop offset="1" stopColor="#8f8f8f" /></linearGradient>
        <linearGradient id={`${id}b`}><stop offset="0" stopColor="#8f8f8f" /><stop offset=".6" stopColor="#d2d2d2" /><stop offset="1" stopColor="#969696" /></linearGradient>
        <clipPath id={`${id}c`}><ellipse rx="20" ry="11" transform="rotate(14)" /></clipPath>
      </defs>
      <path d={`M-40 -7L${-40 + dx} ${-7 + depth}A41 22 14 0 0 ${40 + dx} ${7 + depth}L40 7z`} fill={`url(#${id}s)`} />
      <path d={`M${-40 + dx} ${-7 + depth}A41 22 14 0 0 ${40 + dx} ${7 + depth}`} fill="none" stroke="#222" strokeWidth={line} />
      {ring(41, 22, "#b9b9b9", edge)}
      {ring(39.5, 20.500, "#bcbcbc", selected ? "#5f8fbd" : "#888")}
      {ring(34, 17.500, "#8c8c8c")}
      {ring(31.5, 15.500, "#b4b4b4", "#666")}
      {ring(28, 14, "#c0c0c0", "#555")}
      {ring(20, 11, `url(#${id}b)`, edge)}
      {green && (
        <g clipPath={`url(#${id}c)`}>
          <ellipse cx="-1" cy="13" rx="18" ry="9" transform="rotate(10)" fill="#18c51f" stroke="#0b6b12" strokeWidth={line} />
          <ellipse cx="0" cy="16" rx="15" ry="8" transform="rotate(10)" fill="#8fb5b8" />
        </g>
      )}
      {ring(20, 11, "none", edge)}
      {selected && <path d="M0 -2v11" stroke="#2f7cc8" />}
    </svg>
  );
};

export default function App() {
  return (
    <div className="relative flex min-h-screen flex-col overflow-hidden border-l border-[#a9a9a9] bg-white font-['Noto_Sans','Noto_Sans_CJK_SC',sans-serif] text-xs text-[#444]">
      <svg className="absolute h-0 w-0" aria-hidden="true">
        <defs>
          <radialGradient id="gGray"><stop offset="0" stopColor="#ddd" /><stop offset=".7" stopColor="#c4c4c4" /><stop offset="1" stopColor="#e2e2e2" /></radialGradient>
          <radialGradient id="gGreen" cx=".5" cy=".65"><stop offset="0" stopColor="#d4f3b4" /><stop offset=".7" stopColor="#8cc56d" /><stop offset="1" stopColor="#bcc9b6" /></radialGradient>
          <radialGradient id="gSphere" cx=".55" cy=".3" r=".7"><stop offset="0" stopColor="#eee" /><stop offset=".5" stopColor="#999" /><stop offset="1" stopColor="#3c3c3c" /></radialGradient>
          <linearGradient id="gLight" x1="0" y1="0" x2="1" y2="1"><stop offset="0" stopColor="#f2f2f2" /><stop offset=".5" stopColor="#c2c2c2" /><stop offset="1" stopColor="#666" /></linearGradient>
          <linearGradient id="gFunnel"><stop offset="0" stopColor="#fff" /><stop offset="1" stopColor="#888" /></linearGradient>
          <linearGradient id="gPaint" x1="0" y1="0" x2="1" y2="1"><stop offset="0" stopColor="#fff" /><stop offset="1" stopColor="#7fc6e2" /></linearGradient>
        </defs>
      </svg>

      <header className="flex h-[29px] shrink-0 items-center border-t-4 border-[#b8b8bb] bg-[#fcfcfc]">
        <div className="flex w-[72px] items-center gap-1 pl-2">
          <S n="asm" />
          <span className="flex items-start pb-[2px] font-['DejaVu_Sans',sans-serif] text-[17px] leading-5 text-[#4a4a4a]">creo<span className="text-[8px] leading-3">•</span></span>
        </div>
        <h1 className="flex-1 pl-[302px] text-center text-[13px] leading-5 whitespace-pre text-[#444]">11JJ (启用的) C:\Users\fgy\Desktop\1\3\11\11jj.asm.3 - Creo Parametric 11.0</h1>
      </header>

      <nav className="flex h-[29px] shrink-0 overflow-hidden bg-[#3d4647] text-[13px] text-white">
        {tabs.map(([name, w]) => (
          <button
            key={name}
            className={`flex h-full shrink-0 items-center justify-center overflow-hidden pt-px whitespace-nowrap ${w} ${name === "文件" ? "bg-linear-to-br from-[#62cf4b] to-[#4a9f39]" : ""} ${name === "模型" ? "bg-white text-[#3f8f2f]" : ""} ${name === "辅助功能集" ? "justify-start" : ""}`}
          >
            {name}
          </button>
        ))}
      </nav>

      <div className="flex h-[113px] shrink-0 overflow-hidden border-b border-[#b3bfbc] bg-white">
        <Group label="工程图" w="w-[231px] pl-[3px]">
          <Big icon="newDrawing" label="新建图纸" />
          <Big icon="openDrawing" label="打开图纸" />
          <Big icon="workDir" label="工作目录" />
          <Big icon="search" label="高级查询" />
        </Group>
        <Group label="自动元件" w="w-[61px]">
          <div className="flex flex-1 justify-center"><Minis items={[{ icon: "asmDoc" }, { icon: "cyanDoc" }, { icon: "bigX" }]} /></div>
        </Group>
        <Group label="操作" w="w-[101px]" drop>
          <div className="w-[3px]" />
          <Big icon="regen" label="重新生成" drop />
          <Minis w="w-9" items={[{ icon: "copy" }, { icon: "paste", drop: true, dim: true }, { icon: "grayX", drop: true, dim: true }]} />
        </Group>
        <Group label="获取数据" w="w-[70px]" drop>
          <div className="flex flex-1 justify-center"><Minis items={[{ icon: "shapes" }, { icon: "importCyan" }, { icon: "importBlue" }]} /></div>
        </Group>
        <Group label="元件" w="w-[148px]" drop>
          <div className="w-[3px]" />
          <Big icon="assemble" label="组装" w="w-10" drop />
          <Minis w="w-9" items={[{ icon: "asmDoc", drop: true }, { icon: "rotate" }, { icon: "mirror" }]} />
          <div className="mt-[2px] ml-[5px] w-px bg-[#bfc8c8]" />
          <Big icon="drag" label="拖动元件" w="w-[62px]" />
        </Group>
        <Group label="基准" w="w-[125px]" drop>
          <div className="w-[3px]" />
          <Big icon="plane" label="平面" w="w-10" />
          <Minis w="w-9" items={[{ icon: "axis" }, { icon: "points", drop: true }, { icon: "csys" }]} />
          <Big icon="sketch" label="草绘" w="w-11" />
        </Group>
        <Group label="切口和曲面" w="w-[82px]" drop>
          <div className="w-[18px]" />
          <Minis w="w-16" items={[{ icon: "hole", text: "孔" }, { icon: "extrude", text: "拉伸" }, { icon: "revolve", text: "旋转" }]} />
        </Group>
        <Group label="修饰符" w="w-[58px]" drop>
          <Big icon="pattern" label="阵列" w="w-[57px]" drop />
        </Group>
        <Group label="模型显示" w="w-[267px]" drop>
          <div className="w-px" />
          <Big icon="viewMgr" label="管理视图" w="w-[58px]" drop />
          <Big icon="section" label="截面" w="w-10" drop />
          <Big icon="sphere" label="外观" w="w-10" drop />
          <Minis items={[{ icon: "exploded" }, { icon: "plates" }, { icon: "orient" }]} />
          <Big icon="display" label="显示样式" drop />
          <Big icon="perspective" label="透视图" w="w-11" />
        </Group>
        <Group label="模型意图" w="w-[183px]" drop>
          <div className="w-[2px]" />
          <Big icon="interface" label="元件界面" />
          <Big icon="publish" label="发布几何" />
          <Big icon="table" label="族表" w="w-[41px]" />
          <Minis items={[{ icon: "brackets" }, { icon: "fx" }, { icon: "dEq" }]} />
        </Group>
        <Group label="调查" w="w-[119px]" drop>
          <div className="w-[3px]" />
          <Big icon="bom" label="物料清单" />
          <Big icon="refs" label="参考查看器" w="w-14 px-1" />
        </Group>
        <Group label="WJT276" w="w-[120px]">
          <div className="w-[3px]" />
          <Big icon="color" label="随机着色" />
          <Big icon="transparent" label="设透明度" />
        </Group>
      </div>

      <div className="flex h-[25px] shrink-0 items-center overflow-hidden border-b border-[#b3bfbc] bg-[#fdfefe]">
        <QuickButton n="folderCheck" />
        <button className="flex h-6 shrink-0 items-center whitespace-nowrap text-[#a5a5a5]"><span className="flex w-6 justify-center"><S n="ballGray" /></span><span className="pt-px">显示干涉</span></button>
        <div className="w-1" />
        {quickA.map((n) => <QuickButton key={n} n={n} />)}
        <button aria-label="undo list" className="flex h-6 w-3 items-center justify-center"><Caret dim /></button>
        <QuickButton n="gears" />
        <QuickButton n="redo" />
        <button aria-label="redo list" className="flex h-6 w-4 items-center justify-center"><Caret dim /></button>
        {quickB.map((n, i) => <QuickButton key={i} n={n} active={n === "rainbow"} />)}
        <button aria-label="window list" className="flex h-6 w-3 items-center justify-center"><Caret /></button>
        <div className="ml-[2px] h-full w-px bg-[#bfc8c8]" />
        <button aria-label="customize" className="flex h-6 w-6 flex-col items-center justify-center gap-px"><span className="h-px w-[9px] bg-[#444]" /><Caret /></button>
      </div>

      <main className="flex min-h-0 flex-1">
        <aside className="flex w-[444px] shrink-0 flex-col border-r-3 border-[#e4ecec] bg-white">
          <div className="flex h-[26px] shrink-0 bg-[#e6ecec]">
            <button aria-label="模型树" className="flex w-8 items-center justify-center bg-white pl-[3px]"><S n="tree" /></button>
            <button aria-label="文件夹浏览器" className="flex w-[30px] items-center justify-center"><S n="folders" /></button>
          </div>

          <div className="flex h-8 shrink-0 items-center pr-[5px] pl-3">
            <button aria-label="menu" className="flex w-3 justify-center"><svg viewBox="0 0 9 7" className="h-[7px] w-[9px]"><path d="M0 0h9L4.500 7z" fill="#b0b0b0" /></svg></button>
            <span className="flex w-6 justify-center pt-[3px]"><S n="greenCube" /></span>
            <span className="flex w-[14px] justify-center"><svg viewBox="7 0 2 16" className="h-4 w-[2px]">{small.dots}</svg></span>
            <QuickButton n="expand" />
            <QuickButton n="collapse" />
            <QuickButton n="colsEye" active />
            <div className="mx-1 h-6 w-px bg-[#cfd4d4]" />
            <QuickButton n="treeFilter" />
            <QuickButton n="colsDoc" />
            <div className="mx-1 h-6 w-px bg-[#cfd4d4]" />
            <QuickButton n="gearBlue" />
            <QuickButton n="layers" />
            <QuickButton n="treeCursor" />
            <button aria-label="tree settings" className="relative ml-auto flex h-6 w-6 items-center justify-center"><S n="docCorner" /><svg viewBox="0 0 4 4" className="absolute right-[2px] bottom-0 h-1 w-1"><path d="M4 0v4H0z" fill="#444" /></svg></button>
          </div>

          <div className="flex h-[28px] shrink-0 items-center pr-[5px]">
            <label htmlFor="tree-search" aria-label="搜索" className="flex w-8 justify-center pl-2"><S n="funnel" /></label>
            <div className="flex h-full flex-1 items-center border border-[#a9b5b5]">
              <input id="tree-search" type="text" className="h-full min-w-0 flex-1 bg-transparent px-2 outline-none" />
              <button aria-label="清除" className="flex w-[18px] justify-center"><svg viewBox="0 0 8 8" className="h-2 w-2"><path d="M0 0l8 8M8 0L0 8" stroke="#999" strokeWidth="1.300" /></svg></button>
            </div>
            <button aria-label="搜索选项" className="flex w-[19px] justify-center"><Caret /></button>
            <button aria-label="添加" className="flex w-6 justify-center"><svg viewBox="0 0 11 11" className="h-[11px] w-[11px]"><path d="M0 5.500h11M5.500 0v11" stroke="#999" strokeWidth="3" /></svg></button>
          </div>

          <div className="mt-[6px] flex min-h-0 flex-1 flex-col pr-[5px] pl-2">
            <table className="w-full table-fixed border-separate border-spacing-0 text-[13px]">
              <colgroup><col className="w-[260px]" /><col className="w-[104px]" /><col /></colgroup>
              <thead className="text-left text-[#222]">
                <tr className="h-[23px] bg-[#fafafa] leading-[22px]">
                  <th className="border-r border-b border-[#d5d8d8] p-0" aria-label="名称" />
                  <th className="border-r border-b border-[#d5d8d8] p-0 pl-[5px] text-xs leading-[22px] font-normal">project_short</th>
                  <th className="border-b border-[#d5d8d8] p-0 pl-[5px] text-xs leading-[22px] font-normal">CINDEX</th>
                </tr>
              </thead>
              <tbody className="leading-[22px]">
                <tr className="h-[22px]">
                  <td className="border-r border-[#ebebeb] p-0"><div className="flex h-[22px] items-center gap-1 pl-[4px]"><S n="asm" />11JJ.ASM</div></td>
                  <td className="p-0 pl-px">11JJ</td>
                  <td className="p-0 pl-px">11JJ</td>
                </tr>
                <tr className="h-[22px]">
                  <td className="border-r border-[#ebebeb] p-0"><div className="flex h-[22px] items-center"><Expander /><S n="note" /><span className="pl-1">注释</span></div></td>
                  <td className="p-0" /><td className="p-0" />
                </tr>
                <tr className="h-[22px]">
                  <td className="border-r border-[#ebebeb] p-0"><div className="flex h-[22px] items-center"><Expander /><S n="shapes" /><span className="pl-1">LOCAL_GROUP</span></div></td>
                  <td className="p-0" /><td className="p-0" />
                </tr>
                {parts.map(([name, std]) => (
                  <tr key={name} className="h-[22px]">
                    <td className="overflow-hidden border-r border-[#ebebeb] p-0 whitespace-nowrap">
                      <div className="flex h-[22px] items-center overflow-hidden">
                        <Expander />
                        <S n="asm" />
                        <span className="mb-[6px] ml-1 h-[7px] w-[5px] shrink-0 border border-[#555]" />
                        <span className="pl-[2px]">{name}</span>
                      </div>
                    </td>
                    <td className="p-0" />
                    <td className="overflow-hidden p-0 pl-px whitespace-nowrap">{std}</td>
                  </tr>
                ))}
              </tbody>
            </table>
            <div className="h-[6px] w-[260px] border-r border-[#ebebeb]" />
            <div className="flex items-center pl-[3px]">
              <svg viewBox="0 0 3 6" className="-my-[2px] h-[6px] w-[3px]"><path d="M0 0l3 3 -3 3z" fill="#4fae3c" /></svg>
              <div className="h-[2px] flex-1 bg-[#74b968]" />
            </div>
            <div className="w-[260px] flex-1 border-r border-[#ebebeb]" />
          </div>
        </aside>

        <div className="relative min-w-0 flex-1 overflow-hidden bg-linear-to-b from-[#52a6cb] to-[#c2b6a5]">
          <div className="absolute top-[7px] right-[101px] flex h-[32px] items-center border border-[#b9c6c9] bg-white px-px">
            {viewTools.map((n) => (
              <button key={n} aria-label={n} className="flex h-[26px] w-[26px] items-center justify-center"><S n={n} /></button>
            ))}
          </div>

          <div className="absolute top-[255px] left-[780px] h-[90px] w-[100px]"><Bearing id="a" depth={23} dx={-3} selected /></div>
          <div className="absolute top-[334px] left-[614px] h-[69px] w-[77px]"><Bearing id="b" depth={17} dx={-3} line={1.2} /></div>
          <div className="absolute top-[397px] left-[430px] h-[73px] w-[81px]"><Bearing id="c" depth={15} dx={-2} line={1.2} /></div>
          <div className="absolute top-[435px] left-[320px] h-[50px] w-[56px]"><Bearing id="d" depth={16} dx={-2} line={1.5} /></div>
          <div className="absolute top-[251px] left-[243px] h-[38px] w-[43px]"><Bearing id="e" depth={18} dx={-3} line={2.2} green={false} /></div>

          <div className="absolute right-[22px] bottom-[7px] flex flex-col items-center">
            <div className="flex items-end text-[42px] leading-[42px] text-[#111] italic">
              <span className="text-[#ff6a35]">野火</span><span>论坛</span>
            </div>
            <span className="font-['DejaVu_Sans',sans-serif] text-[15px] leading-5 text-[#8d8d8b] italic">www.proewildfire.cn</span>
            <svg viewBox="0 0 18 42" className="absolute right-[80px] bottom-[36px] h-[42px] w-[18px]" aria-hidden="true">
              <path d="M7 0Q21 13 17 27 13 37 4 42L2 38Q9 33 8 27 6 30 3 32 8 21 2 9q6 4 8 11Q14 12 7 0z" fill="#ff6a35" />
            </svg>
          </div>
        </div>
      </main>

      <div className="pointer-events-none absolute top-0 left-[1033px] h-[41px] w-[185px] rounded-[3px] border-3 border-[#e8281f]" />
      <div className="pointer-events-none absolute top-[377px] left-[12px] h-[84px] w-[279px] rounded-[4px] border-3 border-[#e8281f]" />
      <div className="pointer-events-none absolute top-[462px] left-[4px] h-[53px] w-[289px] rounded-[4px] border-3 border-[#e8281f]" />
    </div>
  );
}
